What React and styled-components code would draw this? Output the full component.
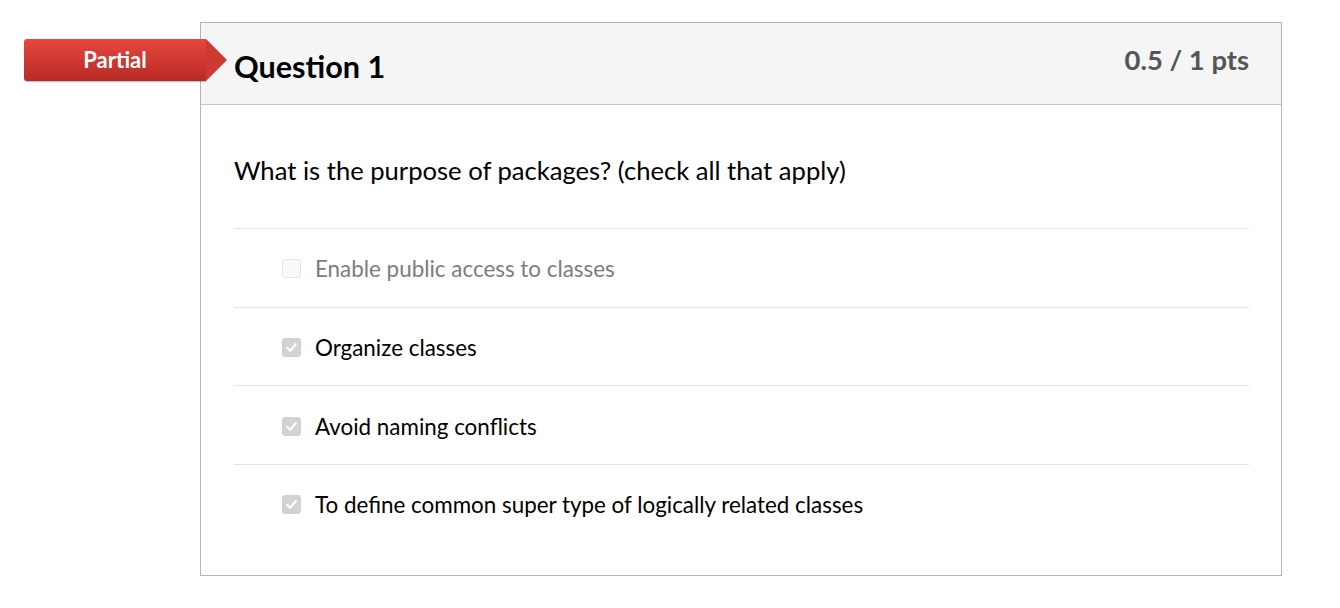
import React from 'react';
import styled, { createGlobalStyle } from 'styled-components';

const GlobalStyle = createGlobalStyle`
  html, body {
    margin: 0;
    padding: 0;
    background: #fff;
    font-family: Lato, "Open Sans", sans-serif;
    color: #000;
  }
`;

const answers = [
  { text: 'Enable public access to classes', checked: false },
  { text: 'Organize classes', checked: true },
  { text: 'Avoid naming conflicts', checked: true },
  { text: 'To define common super type of logically related classes', checked: true },
];

const Page = styled.div`
  padding: 22px 0 0 200px;
  width: 1082px;
`;

const Card = styled.div`
  position: relative;
  border: 1px solid #b5b5b5;
  height: 554px;
  box-sizing: border-box;
`;

const Badge = styled.div`
  position: absolute;
  left: -177px;
  top: 16px;
  width: 182px;
  height: 42px;
  background: linear-gradient(#e6473f, #b92a25);
  border-radius: 3px 0 0 3px;
  color: #fff;
  font-weight: bold;
  font-size: 22px;
  display: flex;
  align-items: center;
  justify-content: center;
  box-shadow: 0 1px 1px rgba(0, 0, 0, 0.25);

  &::after {
    content: '';
    position: absolute;
    right: -21px;
    top: 0;
    border-top: 21px solid transparent;
    border-bottom: 21px solid transparent;
    border-left: 21px solid #cf3932;
  }
`;

const BadgeLabel = styled.span`
  margin-top: -2px;
`;

const Header = styled.div`
  height: 81px;
  background: #f5f5f5;
  border-bottom: 1px solid #c7c7c7;
  display: flex;
  justify-content: space-between;
  padding: 0 32px 0 33px;
`;

const Title = styled.h2`
  margin: 0;
  padding-top: 27px;
  font-size: 30.6px;
  font-weight: bold;
  line-height: 34px;
`;

const Points = styled.div`
  padding-top: 21px;
  font-size: 27.4px;
  font-weight: bold;
  color: #555;
  line-height: 32px;
`;

const Body = styled.div`
  padding: 0 32px 0 33px;
`;

const QuestionText = styled.p`
  margin: 0;
  padding: 50px 0 43px;
  font-size: 25.6px;
  line-height: 30px;
  border-bottom: 1px solid #e6e6e6;
`;

const AnswerRow = styled.div`
  display: flex;
  align-items: center;
  height: 75.7px;
  padding: 2px 0 0 48px;
  border-bottom: ${(p) => (p.last ? 'none' : '1px solid #e2e2e2')};
  font-size: 22.4px;
  color: ${(p) => (p.checked ? '#000' : '#7d7d7d')};
`;

const Box = styled.span`
  width: 19px;
  height: 19px;
  box-sizing: border-box;
  border-radius: 3px;
  margin-right: 14px;
  display: flex;
  align-items: center;
  justify-content: center;
  background: ${(p) => (p.checked ? '#d3d3d3' : '#fafafa')};
  border: 1px solid ${(p) => (p.checked ? '#d0d0d0' : '#e3e3e3')};
`;

const Check = () => (
  <svg width="13" height="13" viewBox="0 0 12 12">
    <path d="M2 6.4 L4.8 9 L10 2.8" fill="none" stroke="#fff" strokeWidth="2" strokeLinecap="round" strokeLinejoin="round" />
  </svg>
);

export default function App() {
  return (
    <>
      <GlobalStyle />
      <Page>
        <Card>
          <Badge>
            <BadgeLabel>Partial</BadgeLabel>
          </Badge>
          <Header>
            <Title>Question 1</Title>
            <Points>0.5 / 1 pts</Points>
          </Header>
          <Body>
            <QuestionText>What is the purpose of packages? (check all that apply)</QuestionText>
            {answers.map((a, i) => (
              <AnswerRow key={a.text} checked={a.checked} last={i === answers.length - 1}>
                <Box checked={a.checked}>{a.checked && <Check />}</Box>
                {a.text}
              </AnswerRow>
            ))}
          </Body>
        </Card>
      </Page>
    </>
  );
}
